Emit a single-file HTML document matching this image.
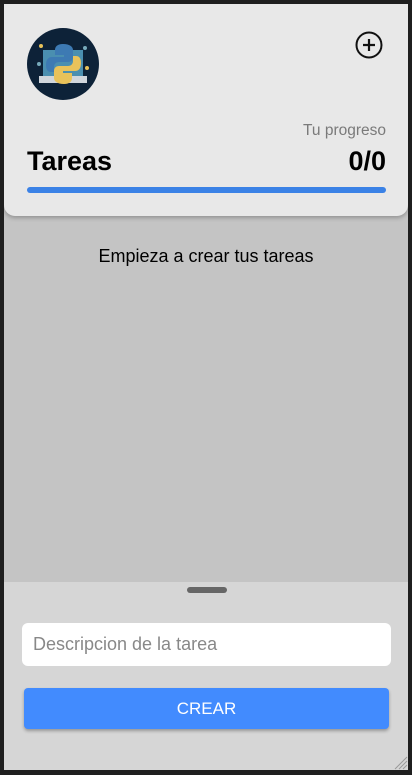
<!DOCTYPE html>
<html><head><meta charset="utf-8"><style>
*{margin:0;padding:0;box-sizing:border-box}
body{width:412px;height:775px;background:#1f1f1f;font-family:"Liberation Sans",Arial,sans-serif;position:relative;overflow:hidden}
.app{position:absolute;left:4px;top:4px;width:404px;height:766px;background:#c4c4c4;overflow:hidden}
.hdr{position:absolute;left:0;top:0;width:404px;height:212px;background:#e8e8e8;border-radius:0 0 11px 11px;box-shadow:0 2px 4px rgba(0,0,0,.25)}
.av{position:absolute;left:23px;top:24px;width:72px;height:72px;border-radius:50%;background:#0d2238;overflow:hidden}
.t{position:absolute;left:23px;top:142px;font-size:27px;font-weight:bold;color:#000}
.n{position:absolute;right:22px;top:142px;font-size:27px;font-weight:bold;color:#000}
.p{position:absolute;right:22px;top:118px;font-size:15.5px;color:#7a7a7a}
.bar{position:absolute;left:23px;top:183px;width:359px;height:6px;border-radius:3px;background:#3b82e6}
.msg{position:absolute;left:0;width:404px;top:242px;text-align:center;font-size:18px;color:#000}
.bot{position:absolute;left:0;top:578px;width:404px;height:188px;background:#d6d6d6}
.h{position:absolute;left:183px;top:5px;width:40px;height:6px;border-radius:3px;background:#666}
.in{position:absolute;left:18px;top:41px;width:369px;height:43px;background:#fff;border-radius:6px;font-size:18px;color:#888;padding:11px 0 0 11px}
.btn{position:absolute;left:20px;top:106px;width:365px;height:41px;background:#428bfe;border-radius:4px;box-shadow:0 2px 3px rgba(0,0,0,.3);color:#fff;font-size:17px;text-align:center;line-height:41px}
</style></head><body>
<div class="app">
<div class="hdr">
<div class="av"><svg width="72" height="72" viewBox="0 0 72 72">
<rect x="16" y="22" width="40" height="26" fill="#4a8fb0"/>
<rect x="12" y="48" width="48" height="7" fill="#d0d6dc"/>
<path d="M36 16c-6 0-8 3-8 6v5h9v2H25c-4 0-6 3-6 8s2 7 5 7h3v-5c0-3 2-5 5-5h9c3 0 5-2 5-5v-7c0-3-3-6-10-6z" fill="#3d7ab3"/>
<path d="M37 56c6 0 8-3 8-6v-5h-9v-2h12c4 0 6-3 6-8s-2-7-5-7h-3v5c0 3-2 5-5 5h-9c-3 0-5 2-5 5v7c0 3 3 6 10 6z" fill="#e8c25a"/>
<circle cx="14" cy="18" r="2" fill="#e8c25a"/><circle cx="58" cy="20" r="2" fill="#7ab"/><circle cx="12" cy="36" r="2" fill="#7ab"/><circle cx="60" cy="40" r="2" fill="#e8c25a"/>
</svg></div>
<svg style="position:absolute;left:351px;top:27px" width="28" height="28" viewBox="0 0 28 28"><circle cx="14" cy="14" r="12.5" fill="none" stroke="#111" stroke-width="2"/><path d="M14 8v12M8 14h12" stroke="#111" stroke-width="2.2"/></svg>
<div class="p">Tu progreso</div>
<div class="t">Tareas</div>
<div class="n">0/0</div>
<div class="bar"></div>
</div>
<div class="msg">Empieza a crear tus tareas</div>
<div class="bot">
<div class="h"></div>
<div class="in">Descripcion de la tarea</div>
<div class="btn">CREAR</div>
<svg style="position:absolute;right:0;bottom:0" width="16" height="16"><path d="M15 3L3 15M15 7L7 15M15 11L11 15" stroke="#999" stroke-width="1"/></svg>
</div>
</div>
</body></html>
